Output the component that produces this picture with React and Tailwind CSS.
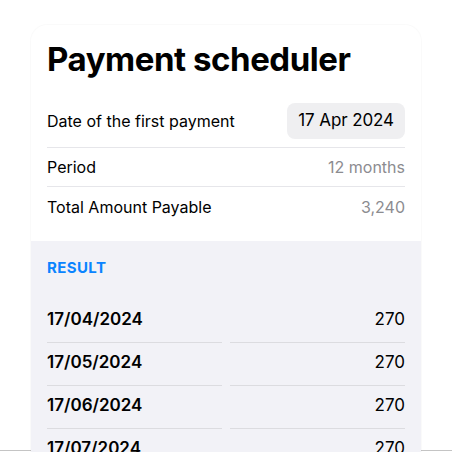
import React from 'react';

const payments = [
  { date: '17/04/2024', amount: '270' },
  { date: '17/05/2024', amount: '270' },
  { date: '17/06/2024', amount: '270' },
  { date: '17/07/2024', amount: '270' },
  { date: '17/08/2024', amount: '270' },
];

const SettingRow = ({ label, children, last = false, className = '' }) => (
  <div
    className={`flex items-center justify-between ${last ? '' : 'border-b border-[#e6e6ea]'} ${className}`}
  >
    <span className="text-[16px] leading-[20px] text-black">{label}</span>
    {children}
  </div>
);

export default function App() {
  return (
    <div
      className="relative h-[452px] w-[452px] overflow-hidden bg-white"
      style={{ fontFamily: 'Inter, "Noto Sans", sans-serif' }}
    >
      <div className="absolute bottom-[1px] left-0 right-0 h-px bg-[#c4c4c4]" />

      <div className="relative z-10 ml-[31px] mt-[25px] w-[390px] overflow-hidden rounded-t-[16px] bg-white shadow-[0_0_0_1px_rgba(0,0,0,0.02)]">
        <div className="px-4">
          <h1 className="pt-[14px] text-[33px] font-bold leading-[40px] tracking-[-0.45px] text-black">
            Payment scheduler
          </h1>

          <div className="mt-[17px]">
            <SettingRow label="Date of the first payment" className="h-[52px] pb-px">
              <span className="flex h-[36px] items-center rounded-[8px] bg-[#efeff1] px-[11px] text-[17px] tracking-[-0.1px] text-black">
                17 Apr 2024
              </span>
            </SettingRow>
            <SettingRow label="Period" className="h-[39px]">
              <span className="text-[16px] text-[#8c8c90]">12 months</span>
            </SettingRow>
            <SettingRow label="Total Amount Payable" last className="h-[39px]">
              <span className="text-[16px] text-[#8c8c90]">3,240</span>
            </SettingRow>
          </div>
        </div>

        <div className="mt-[15px] bg-[#f2f2f7] px-4 pb-10 pt-[17px]">
          <div className="text-[15px] font-bold leading-[20px] tracking-[0.4px] text-[#0a84ff]">
            RESULT
          </div>
          <div className="mt-[22px] grid grid-cols-2 gap-x-2">
            {payments.map((p) => (
              <React.Fragment key={p.date}>
                <div className="h-[43px] border-b border-[#dcdce0] pt-[8px] text-[17px] font-semibold leading-[22px] text-black">
                  {p.date}
                </div>
                <div className="h-[43px] border-b border-[#dcdce0] pt-[8px] text-right text-[17px] leading-[22px] text-black">
                  {p.amount}
                </div>
              </React.Fragment>
            ))}
          </div>
        </div>
      </div>
    </div>
  );
}
